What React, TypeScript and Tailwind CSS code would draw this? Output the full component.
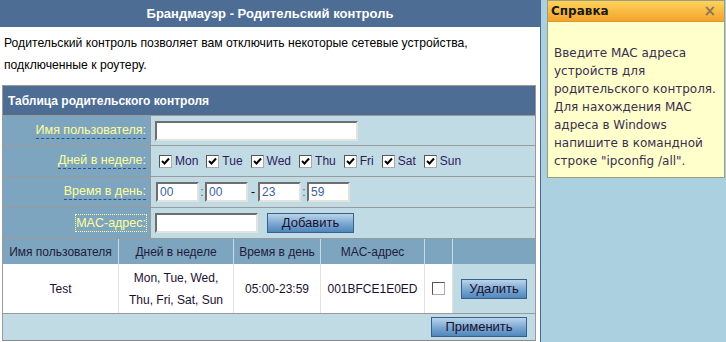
import { ReactNode } from 'react'

const days = ['Mon', 'Tue', 'Wed', 'Thu', 'Fri', 'Sat', 'Sun']

function Check({ checked }: { checked?: boolean }) {
  return (
    <span className="inline-flex w-[13px] h-[13px] bg-white border border-t-[#555] border-l-[#555] border-b-[#aaa] border-r-[#aaa] items-center justify-center shrink-0">
      {checked && (
        <svg width="9" height="9" viewBox="0 0 9 9">
          <path d="M1 4 L3.5 6.5 L8 1.5" stroke="#000" strokeWidth="2" fill="none" />
        </svg>
      )}
    </span>
  )
}

function Field({ value, w }: { value?: string; w: string }) {
  return (
    <span
      className={`inline-flex items-center h-[20px] ${w} bg-white border-2 border-t-[#6e6e6e] border-l-[#6e6e6e] border-b-[#e4e2dc] border-r-[#e4e2dc] pl-[2px] text-[12px] text-[#3c5f9c]`}
    >
      {value}
    </span>
  )
}

function Btn({ children, w }: { children: ReactNode; w: string }) {
  return (
    <span
      className={`inline-flex items-center justify-center ${w} h-[20px] border border-[#3a5f8c] bg-gradient-to-b from-[#b9d4ea] via-[#7eaad2] to-[#4f87bb] text-[13px] text-[#1a1030]`}
    >
      {children}
    </span>
  )
}

function Label({ children, focus }: { children: ReactNode; focus?: boolean }) {
  return (
    <div className="w-[148px] shrink-0 bg-[#7ea5bf] border-r border-[#9a9a9a] flex items-center justify-end pr-[4px]">
      <span
        className={
          focus
            ? 'text-[12.5px] leading-[16px] text-[#ffff99] outline-1 outline-dotted outline-[#ffff99]'
            : 'text-[12.5px] leading-[15px] text-[#ffff99] border-b border-dashed border-[#24588a]'
        }
      >
        {children}
      </span>
    </div>
  )
}

export default function App() {
  return (
    <div className="flex w-[726px] h-[342px] bg-[#abd0df] overflow-hidden" style={{ fontFamily: '"Liberation Sans", Arial, sans-serif' }}>
      <div className="w-[541px] shrink-0 bg-white border-r border-[#4b6a93] flex flex-col">
        <div className="h-[27px] bg-[#4d6d94] flex items-center justify-center text-white font-bold text-[13px]">
          Брандмауэр - Родительский контроль
        </div>
        <div className="pt-[5px] px-[4px] text-[12.2px] leading-[22px] text-black">
          Родительский контроль позволяет вам отключить некоторые сетевые устройства,
          <br />
          подключенные к роутеру.
        </div>
        <div className="mt-[9px] ml-[2px] w-[534px] border border-[#9a9a9a] border-b-[#8a8a8a] flex flex-col">
          <div className="h-[30px] bg-[#4d6d94] border-b border-[#9a9a9a] flex items-center pl-[5px] text-white font-bold text-[12px]">
            Таблица родительского контроля
          </div>
          <div className="h-[30px] flex border-b border-[#9a9a9a]">
            <Label>Имя пользователя:</Label>
            <div className="flex-1 bg-[#c0dbe4] flex items-center pl-[4px]">
              <Field w="w-[203px]" />
            </div>
          </div>
          <div className="h-[31px] flex border-b border-[#9a9a9a]">
            <Label>Дней в неделе:</Label>
            <div className="flex-1 bg-[#c0dbe4] flex items-center pl-[8px] gap-[8px]">
              {days.map((d) => (
                <span key={d} className="flex items-center gap-[3px] text-[12px] text-[#2e1a5c]">
                  <Check checked />
                  {d}
                </span>
              ))}
            </div>
          </div>
          <div className="h-[31px] flex border-b border-[#9a9a9a]">
            <Label>Время в день:</Label>
            <div className="flex-1 bg-[#c0dbe4] flex items-center pl-[5px] text-[12px] text-[#3c5f9c]">
              <Field w="w-[43px]" value="00" />
              <span className="w-[6px] text-center">:</span>
              <Field w="w-[43px]" value="00" />
              <span className="w-[10px] text-center text-black">-</span>
              <Field w="w-[43px]" value="23" />
              <span className="w-[6px] text-center">:</span>
              <Field w="w-[43px]" value="59" />
            </div>
          </div>
          <div className="h-[31px] flex border-b border-[#9a9a9a]">
            <Label focus>MAC-адрес:</Label>
            <div className="flex-1 bg-[#c0dbe4] flex items-center pl-[4px] gap-[9px]">
              <Field w="w-[103px]" />
              <Btn w="w-[87px]">Добавить</Btn>
            </div>
          </div>
          <div className="h-[25px] flex bg-[#7ea5bf] text-[12px] text-[#1c1c3c]">
            <div className="w-[116px] flex items-center justify-center border-r border-[#c8dce6]">Имя пользователя</div>
            <div className="w-[115px] flex items-center justify-center border-r border-[#c8dce6]">Дней в неделе</div>
            <div className="w-[87px] flex items-center justify-center border-r border-[#c8dce6]">Время в день</div>
            <div className="w-[104px] flex items-center justify-center border-r border-[#c8dce6]">MAC-адрес</div>
            <div className="w-[28px] border-r border-[#c8dce6]" />
            <div className="flex-1" />
          </div>
          <div className="h-[50px] flex bg-white border-b border-[#9a9a9a] text-[12px] text-[#1c1030]">
            <div className="w-[116px] flex items-center justify-center border-r border-[#e2e2e2]">Test</div>
            <div className="w-[115px] flex items-center justify-center text-center leading-[22px] border-r border-[#e2e2e2]">
              Mon, Tue, Wed,
              <br />
              Thu, Fri, Sat, Sun
            </div>
            <div className="w-[87px] flex items-center justify-center border-r border-[#e2e2e2]">05:00-23:59</div>
            <div className="w-[104px] flex items-center justify-center border-r border-[#e2e2e2]">001BFCE1E0ED</div>
            <div className="w-[28px] flex items-center justify-center border-r border-[#e2e2e2]">
              <Check />
            </div>
            <div className="flex-1 bg-[#c0dbe4] flex items-center justify-center">
              <Btn w="w-[66px]">Удалить</Btn>
            </div>
          </div>
          <div className="h-[26px] bg-[#c0dbe4] flex items-center justify-end pr-[8px]">
            <Btn w="w-[96px]">Применить</Btn>
          </div>
        </div>
      </div>
      <div className="flex-1 pl-[6px] pr-[2px]">
        <div className="w-[178px] border border-[#a09a80] bg-[#ffffcc]" style={{ fontFamily: '"DejaVu Sans", Verdana, sans-serif' }}>
          <div className="h-[21px] bg-gradient-to-b from-[#fcd35a] to-[#f4a428] flex items-center justify-between px-[3px] border-b border-[#d89a30]">
            <span className="font-bold text-[12px] text-[#1a1a1a]">Справка</span>
            <span className="text-[15px] font-bold text-[#8a7a5a] pr-[5px] leading-none">×</span>
          </div>
          <div className="pt-[22px] pb-[7px] pl-[6px] text-[12px] leading-[18px] text-[#3b2e4d] whitespace-nowrap">
            Введите MAC адреса
            <br />
            устройств для
            <br />
            родительского контроля.
            <br />
            Для нахождения MAC
            <br />
            адреса в Windows
            <br />
            напишите в командной
            <br />
            строке "ipconfig /all".
          </div>
        </div>
      </div>
    </div>
  )
}
